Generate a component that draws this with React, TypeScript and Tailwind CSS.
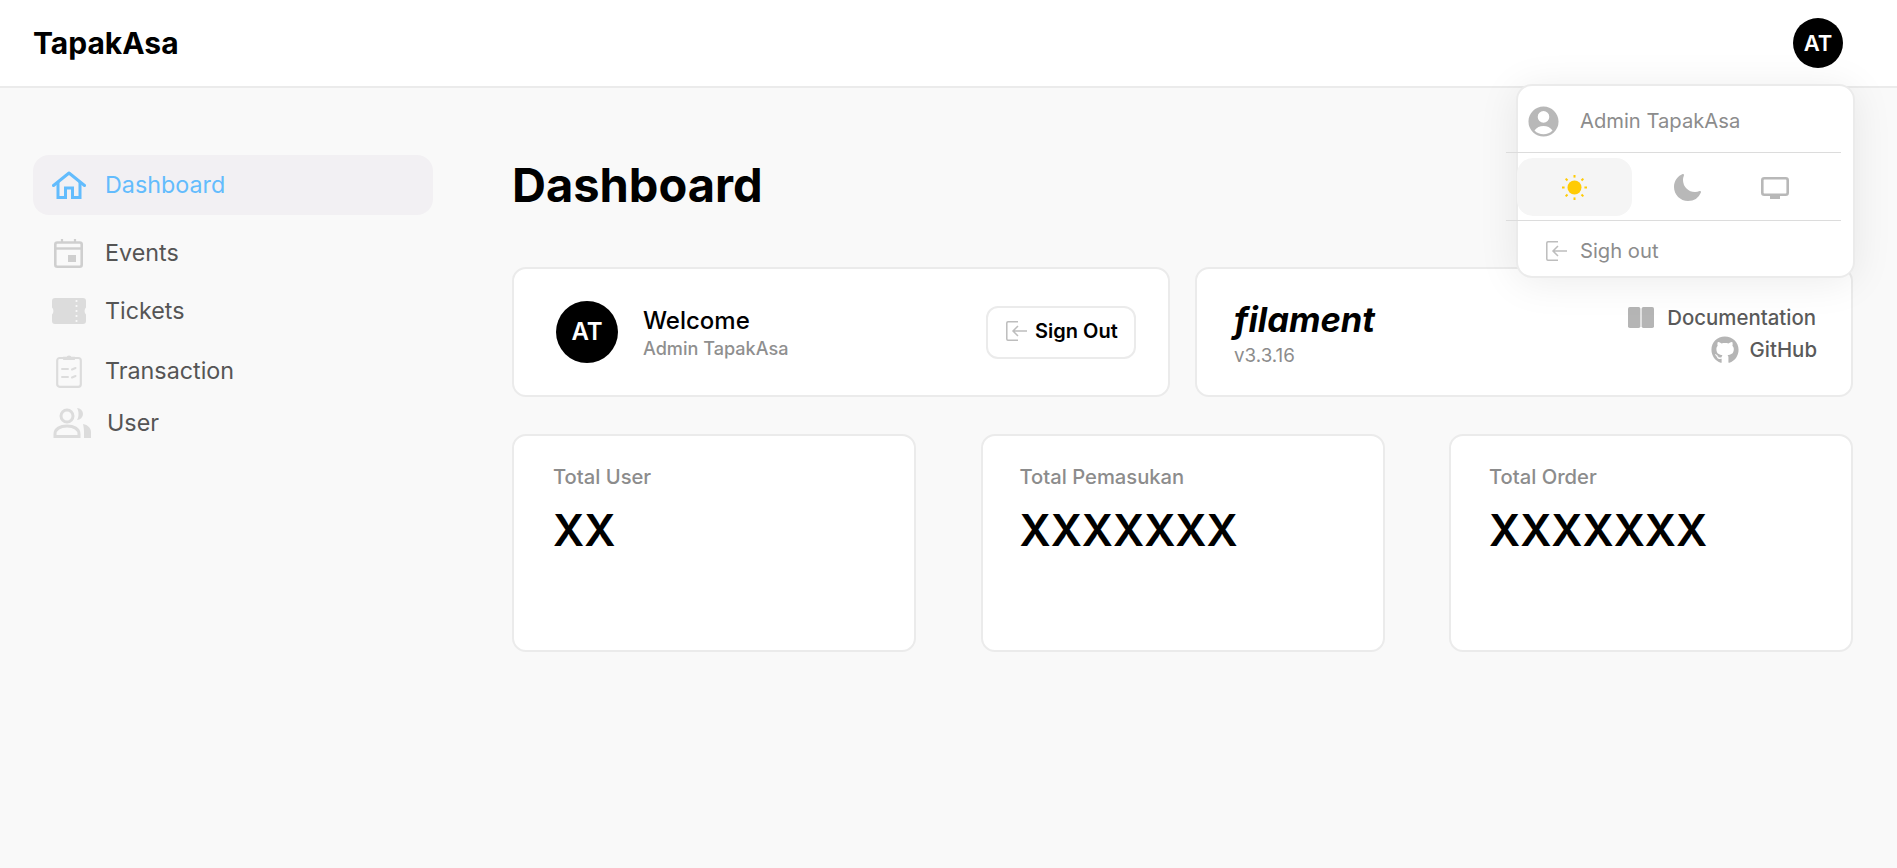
import * as React from 'react'
import { HiUserCircle, HiMoon } from 'react-icons/hi2'
import { FaGithub } from 'react-icons/fa'

const font = { fontFamily: 'Inter, "Liberation Sans", sans-serif' }

function HomeIcon() {
  return (
    <svg width="34" height="28" viewBox="0 0 34 28" fill="none" stroke="currentColor" strokeWidth="3">
      <path d="M1.5 14.5 17 2l15.5 12.5" strokeLinejoin="round" strokeLinecap="round" />
      <path d="M6 11v15.5h7.5V17h7v9.5H28V11" />
    </svg>
  )
}

function CalendarIcon() {
  return (
    <svg width="29" height="29" viewBox="0 0 29 29" fill="none" className="text-[#cfcfcf]">
      <path d="M8 0v4M21 0v4" stroke="currentColor" strokeWidth="2.2" />
      <rect x="1.3" y="3.5" width="26.4" height="24.2" rx="2" stroke="currentColor" strokeWidth="2.6" />
      <path d="M1 9.5h27" stroke="currentColor" strokeWidth="2.4" />
      <rect x="14" y="16" width="8" height="7" fill="currentColor" />
    </svg>
  )
}

function TicketIcon() {
  return (
    <svg width="34" height="26" viewBox="0 0 34 26" className="text-[#dcdcdc]">
      <path
        d="M3 0h28a3 3 0 0 1 3 3v6.5a5 5 0 0 0 0 7V23a3 3 0 0 1-3 3H3a3 3 0 0 1-3-3v-6.5a5 5 0 0 0 0-7V3a3 3 0 0 1 3-3z"
        fill="currentColor"
      />
      {[3, 8, 13, 18, 23].map((y) => (
        <circle key={y} cx="24.5" cy={y} r="1.1" fill="#f9f9f9" />
      ))}
    </svg>
  )
}

function ClipboardIcon() {
  return (
    <svg width="26" height="34" viewBox="0 0 26 34" fill="none" className="text-[#dcdcdc]">
      <rect x="1.2" y="4" width="23.6" height="28.8" rx="2.5" stroke="currentColor" strokeWidth="2.2" />
      <path d="M8 5V3.6h3a2.2 2.2 0 0 1 4 0h3V5z" fill="currentColor" stroke="currentColor" strokeWidth="1.8" />
      <path d="M6 15h6M6 23h6M16 15.5l3.5-1.5M16 23.5l3.5-1.5" stroke="currentColor" strokeWidth="2" strokeLinecap="round" />
    </svg>
  )
}

function UsersIcon() {
  return (
    <svg width="38" height="30" viewBox="0 0 38 30" fill="none" className="text-[#dcdcdc]">
      <circle cx="14" cy="8" r="6" stroke="currentColor" strokeWidth="3" />
      <path d="M2 28.5v-2.5c0-5 5-8 12-8s12 3 12 8v2.5H2z" stroke="currentColor" strokeWidth="3" />
      <path d="M24 0a6 6 0 0 1 0 12c2-3 2-9 0-12zM30 16c5 1 8 4 8 8v6h-7v-6c0-3-.5-6-1-8z" fill="currentColor" />
    </svg>
  )
}

function SunIcon() {
  const rays = [0, 45, 90, 135, 180, 225, 270, 315]
  return (
    <svg width="25" height="25" viewBox="0 0 25 25" fill="none" className="text-[#ffcb05]">
      <circle cx="12.5" cy="12.5" r="7" fill="currentColor" />
      {rays.map((r) => (
        <path key={r} d="M12.5 0v2.6" stroke="currentColor" strokeWidth="2" transform={`rotate(${r} 12.5 12.5)`} />
      ))}
    </svg>
  )
}

function ScreenIcon() {
  return (
    <svg width="28" height="22" viewBox="0 0 28 22" fill="none" className="text-[#b8b8b8]">
      <rect x="1.3" y="1.3" width="25.4" height="16.4" rx="2" stroke="currentColor" strokeWidth="2.6" />
      <rect x="9" y="18" width="10" height="4" fill="currentColor" />
    </svg>
  )
}

function BookIcon() {
  return (
    <svg width="26" height="21" viewBox="0 0 26 21" className="text-[#b5b5b5]">
      <rect x="0" y="0" width="12.4" height="21" rx="1.8" fill="currentColor" />
      <rect x="13.6" y="0" width="12.4" height="21" rx="1.8" fill="currentColor" />
    </svg>
  )
}

function ExitIcon() {
  return (
    <svg width="21" height="20" viewBox="0 0 21 20" fill="none" stroke="currentColor" strokeWidth="1.5" className="text-[#bdbdbd]">
      <path d="M12 .8H2a1.2 1.2 0 0 0-1.2 1.2v16A1.2 1.2 0 0 0 2 19.2h10" />
      <path d="M21 10H7M12 5l-5 5 5 5" />
    </svg>
  )
}

function StatCard({ label, value, className }: { label: string; value: string; className: string }) {
  return (
    <div className={`h-[218px] w-[404px] rounded-[14px] border-2 border-[#ebebeb] bg-white pt-[27px] ${className}`}>
      <div className="text-[20.2px] font-medium leading-[28px] text-[#8c8c8c]">{label}</div>
      <div className="mt-[9px] text-[43.3px] font-semibold leading-[60px] text-black">{value}</div>
    </div>
  )
}

export default function App() {
  return (
    <div style={font} className="relative h-[868px] overflow-hidden bg-[#f9f9f9]">
      <header className="flex h-[88px] items-center justify-between border-b-2 border-[#ebebeb] bg-white pl-[33px] pr-[54px]">
        <div className="text-[30px] font-bold leading-none text-black">TapakAsa</div>
        <div className="flex h-[50px] w-[50px] items-center justify-center rounded-full bg-black text-[22px] font-semibold text-white">
          AT
        </div>
      </header>

      <div className="flex">
        <aside className="w-[512px] shrink-0 pl-[33px] pt-[67px]">
          <nav className="w-[400px] text-[23.3px] text-[#555555]">
            <div className="flex h-[60px] items-center gap-[19px] rounded-[16px] bg-[#f2f0f3] pl-[19px] text-[#63bcfd]">
              <HomeIcon />
              <span>Dashboard</span>
            </div>
            <div className="mt-[21px] flex h-[34px] items-center gap-[22px] pl-[21px]">
              <CalendarIcon />
              <span>Events</span>
            </div>
            <div className="mt-[24px] flex h-[34px] items-center gap-[19px] pl-[19px]">
              <TicketIcon />
              <span>Tickets</span>
            </div>
            <div className="mt-[26px] flex h-[34px] items-center gap-[23px] pl-[23px]">
              <ClipboardIcon />
              <span>Transaction</span>
            </div>
            <div className="mt-[18px] flex h-[34px] items-center gap-[16px] pl-[20px]">
              <UsersIcon />
              <span>User</span>
            </div>
          </nav>
        </aside>

        <main className="w-[1341px] pt-[67px]">
          <h1 className="flex h-[60px] items-center text-[47px] font-bold text-black">Dashboard</h1>

          <div className="mt-[52px] flex gap-[25px]">
            <div className="flex h-[130px] w-[658px] items-center rounded-[14px] border-2 border-[#ebebeb] bg-white pl-[42px] pr-[32px]">
              <div className="flex h-[62px] w-[62px] items-center justify-center rounded-full bg-black text-[24px] font-semibold text-white">
                AT
              </div>
              <div className="ml-[25px] flex-1">
                <div className="text-[24px] font-medium leading-[30px] text-black">Welcome</div>
                <div className="mt-px text-[18.1px] font-medium leading-[22px] text-[#8f8f8f]">Admin TapakAsa</div>
              </div>
              <div className="flex h-[53px] w-[150px] items-center gap-[8px] rounded-[12px] border-2 border-[#ebebeb] pb-[2px] pl-[18px] text-[20px] font-semibold text-black">
                <ExitIcon />
                <span>Sign Out</span>
              </div>
            </div>

            <div className="flex h-[130px] w-[658px] items-center justify-between rounded-[14px] border-2 border-[#ebebeb] bg-white pl-[37px] pr-[34px]">
              <div className="mt-[2px]">
                <div className="text-[34.5px] font-bold italic leading-[42px] text-black">filament</div>
                <div className="mt-[3px] text-[18.8px] leading-[24px] text-[#8c8c8c]">v3.3.16</div>
              </div>
              <div className="mt-[4px] flex flex-col items-end gap-[5px] text-[20.4px] font-medium leading-[26px] text-[#5a5a5a]">
                <div className="mr-[1px] flex items-center gap-[13px]">
                  <BookIcon />
                  <span>Documentation</span>
                </div>
                <div className="flex items-center gap-[11px]">
                  <FaGithub className="h-[28px] w-[28px] text-[#b5b5b5]" />
                  <span>GitHub</span>
                </div>
              </div>
            </div>
          </div>

          <div className="mt-[37px] flex w-[1341px] justify-between">
            <StatCard label="Total User" value="XX" className="pl-[39px]" />
            <StatCard label="Total Pemasukan" value="XXXXXXX" className="pl-[37px]" />
            <StatCard label="Total Order" value="XXXXXXX" className="pl-[38px]" />
          </div>
        </main>
      </div>

      {/* user menu, open */}
      <div className="absolute left-[1516px] top-[84px] h-[194px] w-[339px] rounded-[16px] border-2 border-[#ebebeb] bg-white shadow-[0_4px_40px_rgba(0,0,0,0.08)]">
        <div className="flex h-[66px] items-center pl-[7px] pt-[4px] text-[20.2px] text-[#8c8c8c]">
          <HiUserCircle className="h-[37px] w-[37px] text-[#b8b8b8]" />
          <span className="ml-[18px]">Admin TapakAsa</span>
        </div>
        <div className="-ml-[12px] h-px w-[335px] bg-[#dcdcdc]" />
        <div className="-ml-px flex h-[67px] items-center">
          <div className="flex h-[58px] w-[115px] items-center justify-center rounded-[16px] bg-[#f5f5f5] pt-[2px]">
            <SunIcon />
          </div>
          <div className="ml-[39px] flex w-[32px] justify-center pt-[2px]">
            <HiMoon className="h-[32px] w-[32px] text-[#b8b8b8]" />
          </div>
          <div className="ml-[58px] pt-[2px]">
            <ScreenIcon />
          </div>
        </div>
        <div className="-ml-[12px] h-px w-[335px] bg-[#dcdcdc]" />
        <div className="flex h-[55px] items-center pl-[28px] pt-[5px] text-[20.2px] text-[#8c8c8c]">
          <ExitIcon />
          <span className="ml-[13px]">Sigh out</span>
        </div>
      </div>
    </div>
  )
}
